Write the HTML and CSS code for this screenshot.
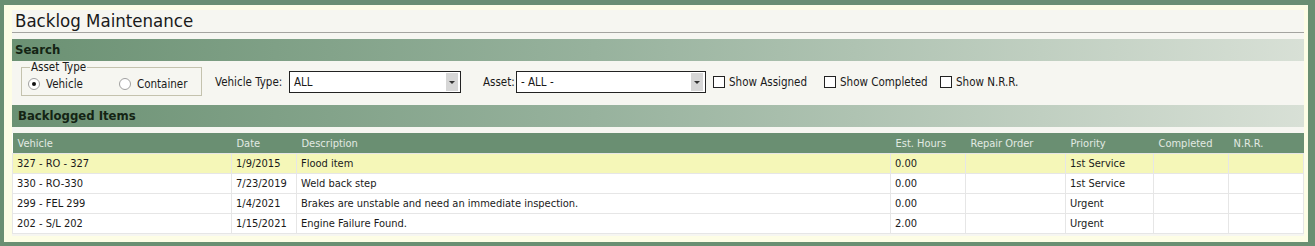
FILE: index.html
```html
<!DOCTYPE html>
<html lang="en">
<head>
  <meta charset="UTF-8">
  <title>Backlog Maintenance</title>
  <link rel="stylesheet" href="styles.css">
</head>
<body>

<div class="frame">
  <div class="page">
    <div class="page-title">Backlog Maintenance</div>

    <!-- Search -->
    <div class="band band-search">Search</div>
    <div class="filters">
      <fieldset class="asset-type">
        <legend>Asset Type</legend>
        <label class="radio"><span class="radio-dot checked"></span>Vehicle</label>
        <label class="radio"><span class="radio-dot"></span>Container</label>
      </fieldset>

      <span class="field-label type-label">Vehicle Type:</span>
      <div class="combo combo-type">
        <span class="combo-text">ALL</span>
        <span class="combo-arrow"></span>
      </div>

      <span class="field-label asset-label">Asset:</span>
      <div class="combo combo-asset">
        <span class="combo-text">- ALL -</span>
        <span class="combo-arrow"></span>
      </div>

      <label class="check check-assigned"><span class="check-box"></span>Show Assigned</label>
      <label class="check check-completed"><span class="check-box"></span>Show Completed</label>
      <label class="check"><span class="check-box"></span>Show N.R.R.</label>
    </div>

    <!-- Backlogged items -->
    <div class="band band-items">Backlogged Items</div>
    <table class="grid">
      <colgroup>
        <col style="width: 219px">
        <col style="width: 65px">
        <col style="width: 594px">
        <col style="width: 75px">
        <col style="width: 100px">
        <col style="width: 88px">
        <col style="width: 75px">
        <col style="width: 75px">
      </colgroup>
      <thead>
        <tr>
          <th>Vehicle</th>
          <th>Date</th>
          <th>Description</th>
          <th>Est. Hours</th>
          <th>Repair Order</th>
          <th>Priority</th>
          <th>Completed</th>
          <th>N.R.R.</th>
        </tr>
      </thead>
      <tbody>
        <tr class="selected">
          <td>327 - RO - 327</td>
          <td>1/9/2015</td>
          <td>Flood item</td>
          <td>0.00</td>
          <td></td>
          <td>1st Service</td>
          <td></td>
          <td></td>
        </tr>
        <tr>
          <td>330 - RO-330</td>
          <td>7/23/2019</td>
          <td>Weld back step</td>
          <td>0.00</td>
          <td></td>
          <td>1st Service</td>
          <td></td>
          <td></td>
        </tr>
        <tr>
          <td>299 - FEL 299</td>
          <td>1/4/2021</td>
          <td>Brakes are unstable and need an immediate inspection.</td>
          <td>0.00</td>
          <td></td>
          <td>Urgent</td>
          <td></td>
          <td></td>
        </tr>
        <tr>
          <td>202 - S/L 202</td>
          <td>1/15/2021</td>
          <td>Engine Failure Found.</td>
          <td>2.00</td>
          <td></td>
          <td>Urgent</td>
          <td></td>
          <td></td>
        </tr>
      </tbody>
    </table>
  </div>
</div>

</body>
</html>
```

FILE: styles.css
```css
/* Basic styles */
body {
  margin: 0;
  background: #6a8f72;
  font-family: "DejaVu Sans Condensed", "Liberation Sans", sans-serif;
  font-size: 11px;
  color: #1a1a1a;
}

/* Cream window frame */
.frame {
  margin: 5px 7px 5px 4px;
  padding: 5px 4px 6px 8px;
  background: #fdfde5;
}

.page {
  background: #f6f6f1;
  padding-bottom: 2px;
}

/* Page title with underline */
.page-title {
  font-size: 18.5px;
  height: 22px;
  line-height: 22px;
  padding-left: 3px;
  border-bottom: 1px solid #a4a4a0;
  margin-bottom: 6px;
}

/* Green gradient section bands */
.band {
  height: 22px;
  line-height: 22px;
  font-weight: bold;
  font-size: 13px;
  color: #142414;
  background: linear-gradient(to right, #6b9173, #97b29d 45%, #d8e0d6);
}

.band-search {
  padding-left: 3px;
}

.band-items {
  padding-left: 6px;
}

/* Search filter row */
.filters {
  display: flex;
  align-items: flex-start;
  height: 44px;
  padding-left: 9px;
  font-size: 11.5px;
}

.asset-type {
  margin: 1px 0 0;
  padding: 0 0 0 6px;
  width: 173px;
  height: 32px;
  border: 1px solid #c4c2ae;
  display: flex;
  align-items: center;
  gap: 36px;
}

.asset-type legend {
  padding: 0 1px;
  margin-left: 2px;
  line-height: 11px;
}

.radio,
.check {
  display: flex;
  align-items: center;
}

.radio-dot {
  width: 10px;
  height: 10px;
  border: 1px solid #a0a0a0;
  border-radius: 50%;
  background: #fff;
  margin-right: 6px;
  position: relative;
}

.radio-dot.checked::after {
  content: "";
  position: absolute;
  top: 3px;
  left: 3px;
  width: 4px;
  height: 4px;
  border-radius: 50%;
  background: #111;
}

.field-label {
  margin-top: 10px;
  line-height: 22px;
}

.type-label {
  width: 74px;
  margin-left: 13px;
}

.asset-label {
  width: 33px;
  margin-left: 22px;
}

.combo {
  display: flex;
  align-items: center;
  margin-top: 10px;
  height: 20px;
  border: 1px solid #222;
  background: #fff;
}

.combo-type {
  width: 170px;
}

.combo-asset {
  width: 188px;
}

.combo-text {
  flex: 1;
  padding-left: 4px;
}

.combo-arrow {
  width: 12px;
  height: 18px;
  margin-right: 2px;
  background: #d6d6d6;
  position: relative;
}

.combo-arrow::after {
  content: "";
  position: absolute;
  top: 8px;
  left: 3px;
  border-left: 3px solid transparent;
  border-right: 3px solid transparent;
  border-top: 3px solid #333;
}

.check {
  margin-top: 10px;
  height: 22px;
  margin-left: 7px;
}

.check-assigned {
  width: 111px;
}

.check-completed {
  width: 116px;
  margin-left: 0;
}

.check-completed + .check {
  margin-left: 0;
}

.check-box {
  width: 10px;
  height: 10px;
  border: 1px solid #222;
  background: #fff;
  margin-right: 4px;
}

/* Backlog grid */
.grid {
  margin-top: 6px;
  width: 1291px;
  border-collapse: collapse;
  table-layout: fixed;
  background: #fff;
}

.grid th {
  background: #6a8f72;
  color: #e2eae2;
  font-weight: normal;
  text-align: left;
  height: 20px;
  padding: 0 0 0 5px;
}

.grid td {
  height: 19px;
  padding: 0 0 0 4px;
  border: 1px solid #e6e6e6;
  white-space: nowrap;
  overflow: hidden;
}

.grid tr.selected td {
  background: #f5f7b8;
}
```
